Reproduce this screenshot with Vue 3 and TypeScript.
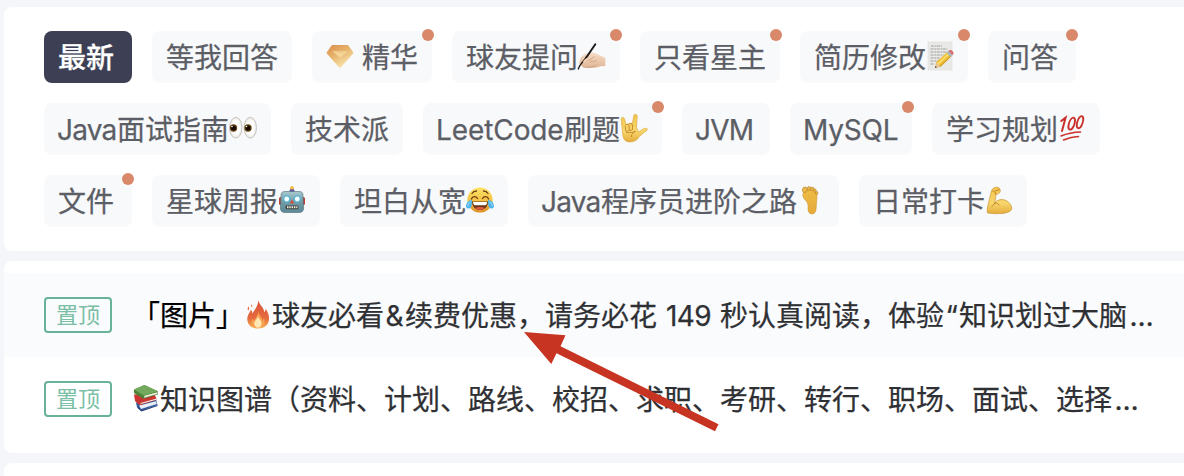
<script setup lang="ts">
interface Segment {
  text?: string
  icon?: string
  width?: number
  tracking?: number
  strong?: boolean
}
interface Tag {
  parts: Segment[]
  dot?: boolean
  active?: boolean
  spaced?: boolean
}

const rows: Tag[][] = [
  [
    { parts: [{ text: '最新' }], active: true },
    { parts: [{ text: '等我回答' }] },
    { parts: [{ icon: 'gem' }, { text: '精华' }], dot: true, spaced: true },
    { parts: [{ text: '球友提问' }, { icon: 'writing' }], dot: true },
    { parts: [{ text: '只看星主' }], dot: true },
    { parts: [{ text: '简历修改' }, { icon: 'memo' }], dot: true },
    { parts: [{ text: '问答' }], dot: true },
  ],
  [
    { parts: [{ text: 'Java', width: 59, tracking: -0.8 }, { text: '面试指南' }, { icon: 'eyes' }] },
    { parts: [{ text: '技术派' }] },
    { parts: [{ text: 'LeetCode', width: 127, tracking: -0.1 }, { text: '刷题' }, { icon: 'rock' }], dot: true },
    { parts: [{ text: 'JVM', width: 58, tracking: -0.8 }] },
    { parts: [{ text: 'MySQL', width: 94, tracking: -0.2 }], dot: true },
    { parts: [{ text: '学习规划' }, { icon: 'hundred' }] },
  ],
  [
    { parts: [{ text: '文件' }], dot: true },
    { parts: [{ text: '星球周报' }, { icon: 'robot' }] },
    { parts: [{ text: '坦白从宽' }, { icon: 'joy' }] },
    { parts: [{ text: 'Java', width: 59, tracking: -0.8 }, { text: '程序员进阶之路' }, { icon: 'foot' }] },
    { parts: [{ text: '日常打卡' }, { icon: 'biceps' }] },
  ],
]

const topics: Segment[][] = [
  [
    { text: '「图片」', strong: true },
    { icon: 'fire' },
    { text: '球友必看' },
    { text: '&', width: 21 },
    { text: '续费优惠，请务必花' },
    { text: '149', width: 63, tracking: -0.5 },
    { text: '秒认真阅读，体验' },
    { text: '“', width: 15 },
    { text: '知识划过大脑' },
    { text: '…', width: 29 },
  ],
  [
    { icon: 'books' },
    { text: '知识图谱（资料、计划、路线、校招、求职、考研、转行、职场、面试、选择' },
    { text: '…', width: 29 },
  ],
]

function latinStyle(part: Segment) {
  if (!part.width) return undefined
  return { width: part.width + 'px', letterSpacing: (part.tracking ?? 0) + 'px' }
}

const icons: Record<string, string> = {
  gem: `<path d="M6 2h16l5.2 7.2q.5.8-.2 1.6L15 24.3q-1 1-2 0L1 10.8q-.7-.8-.2-1.6z" fill="url(#gemFill)"/>
    <path d="M6.5 8h15.2L14 14.8z" fill="#f6d79b"/><path d="M6.5 8h15.2L14 10.6z" fill="#f0c888"/>`,
  writing: `<path d="M1.500 18C2.500 13 7 10.800 11 10c3-.5 6-.2 8.500 1.200L27.300 15v8l-5 .3c-3 1.300-7 1.800-12 1.600-4-.1-6.500-.7-7.300-2.600C1.500 21 1 20 1.500 18z" fill="url(#skin)"/>
    <path d="M8 18c3-.8 6-2.300 8.500-4.500M5 24c5 .7 9 .2 13-1.200M12 18.500c3 .7 5-.3 7-1.500" fill="none" stroke="#c79c7d" stroke-width=".7"/>
    <path d="M17.300 1.200 8.300 14.500" stroke="#181818" stroke-width="1.900" stroke-linecap="round"/>
    <path d="M8.500 14 1.800 22.500.3 26" stroke="#151515" stroke-width="1.300" stroke-linecap="round" fill="none"/>
    <path d="M5 18.500c1.500-2.500 4-4 7-4.500-1.500 3-3.500 4.800-6.500 5.800z" fill="#f3cfb2"/>`,
  memo: `<rect x="2" y="-1" width="24" height="28" fill="#e9e9e7" stroke="#d9d9d7" stroke-width=".5"/>
    <g stroke="#8a8a8a" stroke-width=".8" fill="none" stroke-dasharray="3 .8 1.800 .6"><path d="M5 3h11M4.500 6h17M4.500 9h17M4.500 12h13M4.500 15h9M4.500 18h8M4.500 21h4"/></g>
    <path d="M9 25l1.300-6L21.500 8.800l4.300 4.300L15 23.500z" fill="#efbd38"/>
    <path d="M11.500 21.500 23 10.500" stroke="#f9dc67" stroke-width="2"/><path d="M14 23.500 25 13" stroke="#ca8d25" stroke-width="1"/>
    <path d="M9 25l1.200-5.300 4.200 4z" fill="#e4c39b"/><path d="M9 25l.5-2 1.300 1.200z" fill="#333"/>
    <path d="M20.500 9.800l2-1.900 4.200 4.200-2 1.900z" fill="#a7b8bf"/><path d="M22.300 8l1.200-.8c2-.7 4.800 1.800 3.800 4l-.8 1z" fill="#d96f72"/>`,
  eyes: `<g stroke="#c9c6c3" stroke-width="1"><ellipse cx="6.800" cy="12.700" rx="6.200" ry="10.400" fill="url(#eyeFill)"/><ellipse cx="21.300" cy="12.700" rx="6.200" ry="10.400" fill="url(#eyeFill)"/></g>
    <g fill="#6b4514"><circle cx="4.500" cy="13" r="3.700"/><circle cx="19" cy="13" r="3.700"/></g><g fill="#130a03"><circle cx="4.500" cy="13" r="2.500"/><circle cx="19" cy="13" r="2.500"/></g>
    <g fill="#fff"><circle cx="3" cy="11.500" r=".8"/><circle cx="17.500" cy="11.500" r=".8"/></g>`,
  rock: `<path d="M1.200 4.200C.8 2 3.800 1.700 4.400 3.800L6 9.500 12.500 8 13.700.7c.4-2.200 3.700-1.600 3.500.6l-.7 11.200 2.200 4.500 4.300-3c2-1.200 4-.9 4.400.2.300 1.300-2.300 2.300-3.600 3.500L19 21.800C17.500 25 14.500 27 10 27c-5.200 0-7-3.200-7.300-8z" fill="url(#handFill)" stroke="#d8a136" stroke-width=".6"/>
    <path d="M5.500 10.500c.5-1.600 3-1.700 3.400 0l.4 4.500M9 9.500c.7-1.500 3.300-1.200 3.500.5v4.500M5.200 11l.6 4.800c1.200 1.300 3 .2 3.300-.8 1.200 1 3 .4 3.500-1M6 17c4 1.300 7 .3 9.500-.7-3 1.500-4.300 3.200-4 5.700" fill="none" stroke="#b77921" stroke-width=".75"/>`,
  hundred: `<g fill="none" stroke="#c8302a" stroke-linecap="round"><path d="M3.200 6 7.600 2.600 4 16" stroke-width="2"/>
    <ellipse cx="13.700" cy="8.600" rx="2.700" ry="6.300" transform="rotate(18 13.700 8.600)" stroke-width="1.800"/>
    <ellipse cx="22" cy="7.200" rx="2.700" ry="6.300" transform="rotate(18 22 7.200)" stroke-width="1.800"/>
    <path d="M3 21Q12 17.300 22.500 17" stroke-width="1.500"/><path d="M5.500 25Q13 21.700 20.500 21.600" stroke-width="1.500"/></g>`,
  robot: `<path d="M12.500 1h3v4h-3z" fill="#67539a"/><circle cx="14" cy=".8" r="1.900" fill="#f4bd3e"/><rect x="11.500" y="2.500" width="5" height="2.500" rx="1" fill="#6453a0"/>
    <rect x="1" y="10" width="4" height="8" rx="1.500" fill="#b74438"/><rect x="23" y="10" width="4" height="8" rx="1.500" fill="#b74438"/>
    <path d="M7 4.500h14c3 0 4 1.500 4 4l.6 12.500c0 3-1.600 4.500-4.600 4.500H7c-3 0-4.600-1.500-4.600-4.500L3 8.500c0-2.500 1-4 4-4z" fill="url(#robotFill)" stroke="#466b77" stroke-width=".6"/>
    <circle cx="8.700" cy="12" r="3.700" fill="#5bb3d3"/><circle cx="19.300" cy="12" r="3.700" fill="#5bb3d3"/><circle cx="8.700" cy="12" r="2.400" fill="#f4ffff"/><circle cx="19.300" cy="12" r="2.400" fill="#f4ffff"/>
    <path d="M14 12.500l2 4h-4z" fill="#dc4534"/><rect x="7.500" y="18.600" width="13" height="3.600" rx="1.200" fill="#3d4142"/><path d="M9 20.300h10.500" stroke="#f4f1df" stroke-width="2" stroke-dasharray="1.500 .8"/>`,
  joy: `<circle cx="14" cy="13" r="12.600" fill="url(#faceFill)"/><path d="M6 14.500h16c0 5-3.500 8.500-8 8.500s-8-3.500-8-8.500z" fill="#683719"/><path d="M7 15h14c0 1.700-.5 2.700-1.500 3.200h-11C7.500 17.500 7 16.500 7 15z" fill="#fff"/>
    <path d="M9 21c3-1.500 7-1.500 10 0-2.500 2.400-7.500 2.400-10 0z" fill="#e55845"/><path d="M5.500 12c.8-3 4.500-3.200 6-.5M16.500 11.500c1.500-2.700 5.200-2.500 6 .5M6 6.500Q7.500 4 10.500 4M17.500 4q3 0 4.500 2.500" fill="none" stroke="#714019" stroke-width="1.300" stroke-linecap="round"/>
    <path d="M5.800 13C2 13-.7 17 .2 20c1 2.300 4.500 1.800 5.200-.5.700-2 .6-4.500.4-6.500zM22.200 13c3.800 0 6.500 4 5.600 7-1 2.300-4.500 1.800-5.200-.5-.7-2-.6-4.500-.4-6.500z" fill="#4eb5ed"/><path d="M4.500 15q-2.500 1-3 4M23.500 15q2.500 1 3 4" stroke="#a4e0fc" fill="none"/>`,
  foot: `<path d="M7 5c1-2 5-2.800 8-1.500 5 1.500 5.500 5 4.800 9-.6 3.600-.2 6.500-.8 10.200-.5 3.500-2.800 4.800-5.400 4-2.600-.9-2.800-4-2.500-7.700C11.300 14 6 12.500 5.800 8.500 5.700 7 6.200 6 7 5z" fill="url(#footFill)" stroke="#c68e2b" stroke-width=".5"/>
    <g fill="#eabb48" stroke="#b77b21" stroke-width=".6"><ellipse cx="7.800" cy="2.800" rx="2.300" ry="2.800" transform="rotate(18 7.800 2.800)"/><ellipse cx="12" cy="1.400" rx="1.700" ry="1.900"/><ellipse cx="15.300" cy="1.900" rx="1.500" ry="1.800"/><ellipse cx="17.900" cy="3.500" rx="1.300" ry="1.700"/><ellipse cx="19.700" cy="6" rx="1.200" ry="1.600"/></g>`,
  biceps: `<path d="M2.500 26C1.300 22 4.200 14 6 5.500 6.700 2 8.500.500 11 .300c3-.4 4.800 1.700 4.200 4.300-.5 2-2.700 2.500-4.200 2.900l-1.200 8.300c3.500-4.200 9-4 12.500-1.500 3.500 2.400 5.300 6.500 4 8.700C24 26.500 14 27.500 2.500 26z" fill="url(#handFill)" stroke="#c68928" stroke-width=".6"/>
    <path d="M7.500 4c2 .2 3 1.200 3.500 3.500M10 4l4.500-1.500M9.800 15.800c-1 2-1.500 3-3.300 3.800M9.800 15.800c2.300.2 3.500 1 4.500 2.500" fill="none" stroke="#b77720" stroke-width=".9"/>`,
  fire: `<path d="M14.300-.8c1 5 5.700 7 6 12 1-1 1.300-2.300 1.200-3.400 2.500 3.200 4 7 3.400 11.200C24.300 24.500 20 27.500 14 27.500S3.800 24.500 3.300 18.800C3 14 6 11.500 7 8.500c.8 1.300 1.200 2.700 1.200 4 2-3.300 6-7 6.100-13.300z" fill="url(#fireFill)"/>
    <path d="M5 5.500c-1.800 1.200-1.700 3-.7 4 .9-1.200 1-2.700.7-4zM7.500 3l-.6 2.200L8.600 6z" fill="#e66644"/><path d="M14.300 10.500c.4 4 4 5.100 4 9 1-.8 1.300-1.500 1.400-2.500 2.500 4.500-.8 9.500-5.700 9.500s-8-4-5.600-9c.7 1 .7 1.500 1.200 2.500 2-3 4.500-5.500 4.700-9.500z" fill="#f6a052"/>
    <path d="M14 15c.5 3.300 3.800 4.200 3.600 7.600-.2 2.900-1.900 4.200-3.700 4.200s-3.600-1.700-3.600-4.200c0-3 3.200-4.300 3.700-7.600z" fill="#ffe7b4"/>`,
  books: `<path d="M4 17.500l20-3.500 1.500 6L9 25.800 5 22z" fill="#31589f"/><path d="M7 20.500l17-4.200.8 2.800L9 24z" fill="#e9edf5"/>
    <path d="M2 9.500l20-1 2.500 5L7.500 20.200 3 16z" fill="#cb3430"/><path d="M3.500 15.500l19-4.500 2 4L8 20z" fill="#c73630"/><path d="M8.500 18l15.500-4.200.3.900L8.700 19z" fill="#f7efe8"/>
    <path d="M2 4.500 12.500 0l13.300 6.300v3.200L11.500 13.800 2 8z" fill="#4d8538"/><path d="M12.500 10.700l12.800-3.500v1.900L12 12.700z" fill="#f1f0de"/><path d="M2 4.500 12.500 0l13.300 6.300L12 10.500z" fill="#73a95c"/>
    <path d="M5.500 21.500l4 3.800L25.500 20v1L9.500 26.500 5.500 23z" fill="#233e76"/>`,
}
</script>

<template>
  <div class="page">
    <svg class="defs" width="0" height="0" aria-hidden="true">
      <defs>
        <linearGradient id="gemFill" x1="0" y1="0" x2=".6" y2="1">
          <stop offset="0" stop-color="#d98c48" /><stop offset=".5" stop-color="#e8b76f" /><stop offset="1" stop-color="#fae6b0" />
        </linearGradient>
        <linearGradient id="skin" x1="0" y1="0" x2="0" y2="1">
          <stop offset="0" stop-color="#f6dcc4" /><stop offset="1" stop-color="#dfb596" />
        </linearGradient>
        <radialGradient id="eyeFill">
          <stop offset=".6" stop-color="#fff" /><stop offset="1" stop-color="#e6e4e2" />
        </radialGradient>
        <linearGradient id="handFill" x1="0" y1="0" x2="0" y2="1">
          <stop offset="0" stop-color="#f2c64f" /><stop offset=".6" stop-color="#f7d66c" /><stop offset="1" stop-color="#e4ac3c" />
        </linearGradient>
        <linearGradient id="footFill" x1="0" y1="0" x2="0" y2="1">
          <stop offset="0" stop-color="#eebd45" /><stop offset="1" stop-color="#e5a93a" />
        </linearGradient>
        <linearGradient id="robotFill" x1="0" y1="0" x2="0" y2="1">
          <stop offset="0" stop-color="#a7c8ce" /><stop offset=".5" stop-color="#729ba5" /><stop offset="1" stop-color="#5d8995" />
        </linearGradient>
        <linearGradient id="faceFill" x1="0" y1="0" x2="0" y2="1">
          <stop offset="0" stop-color="#fbe568" /><stop offset=".6" stop-color="#f3bc3e" /><stop offset="1" stop-color="#dd912b" />
        </linearGradient>
        <linearGradient id="fireFill" x1="0" y1="0" x2="0" y2="1">
          <stop offset="0" stop-color="#dc523b" /><stop offset=".65" stop-color="#e66b3e" /><stop offset="1" stop-color="#f7b653" />
        </linearGradient>
      </defs>
    </svg>

    <section class="card tags">
      <div v-for="(row, r) in rows" :key="r" class="tag-row">
        <div v-for="(tag, t) in row" :key="t" class="tag" :class="{ active: tag.active, spaced: tag.spaced }">
          <template v-for="(part, p) in tag.parts" :key="p">
            <svg v-if="part.icon" class="icon" viewBox="0 0 28 28" v-html="icons[part.icon]" />
            <span v-else class="text" :class="{ latin: part.width }" :style="latinStyle(part)">{{ part.text }}</span>
          </template>
          <i v-if="tag.dot" class="dot" />
        </div>
      </div>
    </section>

    <section class="card topics">
      <div v-for="(topic, i) in topics" :key="i" class="topic" :class="{ hovered: i === 0 }">
        <span class="badge">置顶</span>
        <div class="title">
          <template v-for="(part, p) in topic" :key="p">
            <svg v-if="part.icon" class="icon" viewBox="0 0 28 28" v-html="icons[part.icon]" />
            <span
              v-else
              class="text"
              :class="{ latin: part.width, centered: part.width, strong: part.strong }"
              :style="latinStyle(part)"
            >{{ part.text }}</span>
          </template>
        </div>
      </div>
    </section>

    <section class="card next" />

    <svg class="arrow" viewBox="0 0 200 106" width="200" height="106">
      <path d="M4 2 45.500 5.300 40.500 16.200 198.500 94.200 195 101.300 36.500 23.300 31.300 34z" fill="#c83422" />
    </svg>
  </div>
</template>

<style>
body {
  margin: 0;
  background: #f5f6fa;
  overflow: hidden;
}
</style>

<style scoped>
.page {
  position: relative;
  box-sizing: border-box;
  width: 1184px;
  height: 476px;
  padding: 7px 0 0 4px;
  display: flex;
  flex-direction: column;
  gap: 10px;
  overflow: hidden;
  background: #f5f6fa;
  font-family: Inter, "Noto Sans CJK SC", sans-serif;
  font-size: 28px;
  line-height: 40px;
}
.defs {
  position: absolute;
}
.card {
  flex: none;
  box-sizing: border-box;
  background: #fff;
  border-radius: 8px 0 0 8px;
}
.tags {
  height: 244px;
  padding: 24px 0 0 40px;
  display: flex;
  flex-direction: column;
  gap: 20px;
}
.tag-row {
  display: flex;
  gap: 20px;
}
.tag {
  position: relative;
  box-sizing: border-box;
  min-width: 88px;
  height: 52px;
  padding: 0 14px;
  display: flex;
  align-items: center;
  border-radius: 8px;
  background: #f8f9fb;
  color: #5c5e66;
  white-space: nowrap;
}
.tag.active {
  background: #3d4055;
  color: #fff;
  font-weight: 500;
}
.tag.spaced {
  gap: 8px;
}
.text {
  display: block;
  padding-top: 2px;
  -webkit-text-stroke: 0.25px currentColor;
}
.latin {
  margin-left: -1px;
  margin-right: 1px;
}
.latin.centered {
  margin: 0;
  text-align: center;
}
.icon {
  display: block;
  flex: none;
  width: 28px;
  height: 28px;
  overflow: visible;
}
.dot {
  position: absolute;
  top: -2px;
  right: -2px;
  width: 12px;
  height: 12px;
  border-radius: 50%;
  background: #d98869;
}
.topics {
  height: 192px;
  padding-top: 12px;
}
.topic {
  box-sizing: border-box;
  height: 84px;
  padding-left: 40px;
  display: flex;
  align-items: center;
  gap: 20px;
}
.topic.hovered {
  background: #fafbfd;
}
.badge {
  box-sizing: border-box;
  width: 68px;
  height: 36px;
  border: 2px solid #68b398;
  border-radius: 4px;
  color: #7bbfa6;
  font-size: 22px;
  line-height: 33px;
  text-align: center;
}
.title {
  display: flex;
  align-items: center;
  color: #2f3034;
  white-space: nowrap;
}
.strong {
  color: #000;
}
.next {
  height: 40px;
}
.arrow {
  position: absolute;
  left: 520px;
  top: 330px;
}
</style>
